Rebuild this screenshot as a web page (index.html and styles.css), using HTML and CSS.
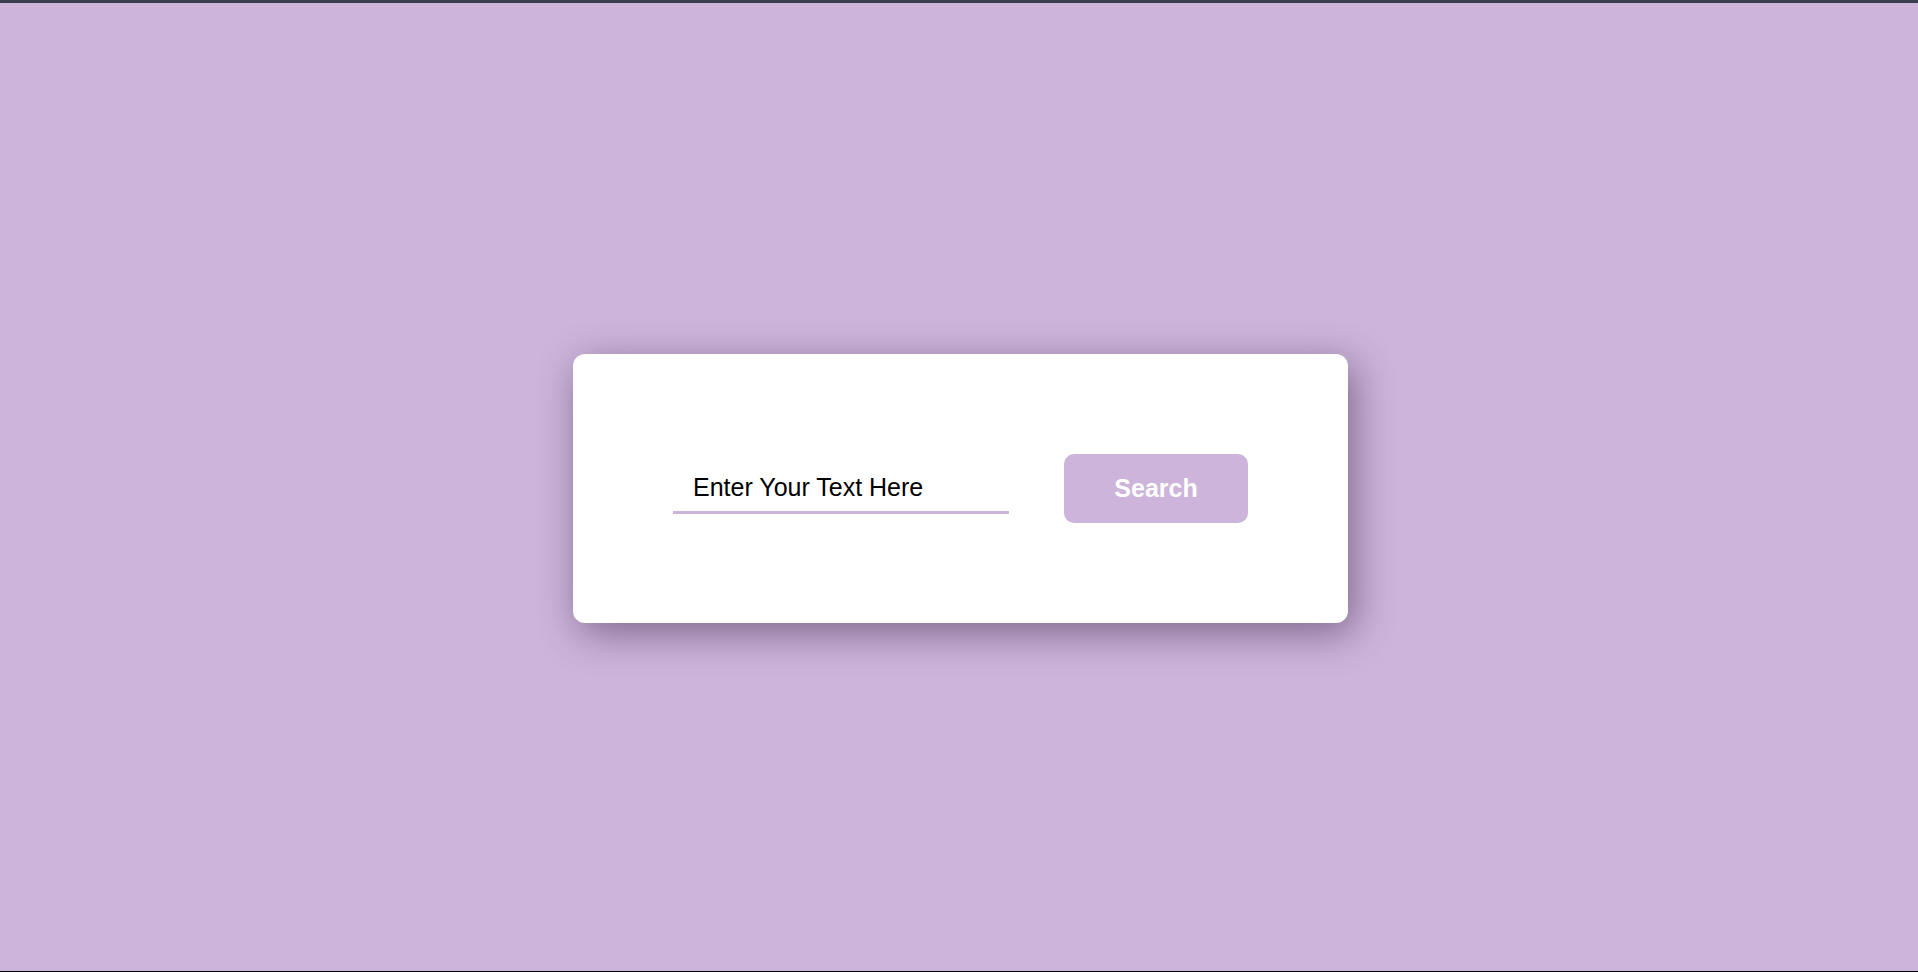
FILE: index.html
```html
<!DOCTYPE html>
<html lang="en">
<head>
<meta charset="utf-8">
<title>Search</title>
<link rel="stylesheet" href="styles.css">
</head>
<body>
<main class="page">
  <form class="card">
    <input class="search-input" type="text" placeholder="Enter Your Text Here">
    <button class="search-btn" type="button">Search</button>
  </form>
</main>
</body>
</html>
```
FILE: styles.css
```css
* { box-sizing: border-box; }
html, body { margin: 0; padding: 0; }
body {
  background: #cdb4db;
  font-family: "Liberation Sans", Arial, sans-serif;
  border-top: 3px solid #3a3f50;
  border-bottom: 1px solid #000;
  height: 972px;
}
.page {
  height: 100%;
  display: flex;
  align-items: center;
  justify-content: center;
  padding: 3px 0 0 3px;
}
.card {
  width: 775px;
  height: 269px;
  background: #fff;
  border-radius: 12px;
  padding: 0 100px;
  display: flex;
  align-items: center;
  gap: 55px;
  box-shadow: 6px 10px 40px rgba(30, 10, 40, 0.45);
}
.search-input {
  width: 336px;
  height: 51px;
  border: none;
  border-bottom: 3px solid #cdb4db;
  padding: 0 20px;
  font-family: "Liberation Sans", Arial, sans-serif;
  font-size: 25px;
  color: #000;
  outline: none;
  background: transparent;
}
.search-input::placeholder { color: #000; opacity: 1; }
.search-btn {
  width: 184px;
  height: 69px;
  border: none;
  border-radius: 10px;
  background: #cdb4db;
  color: #fff;
  font-family: "Liberation Sans", Arial, sans-serif;
  font-weight: bold;
  font-size: 25px;
  cursor: pointer;
}
```
